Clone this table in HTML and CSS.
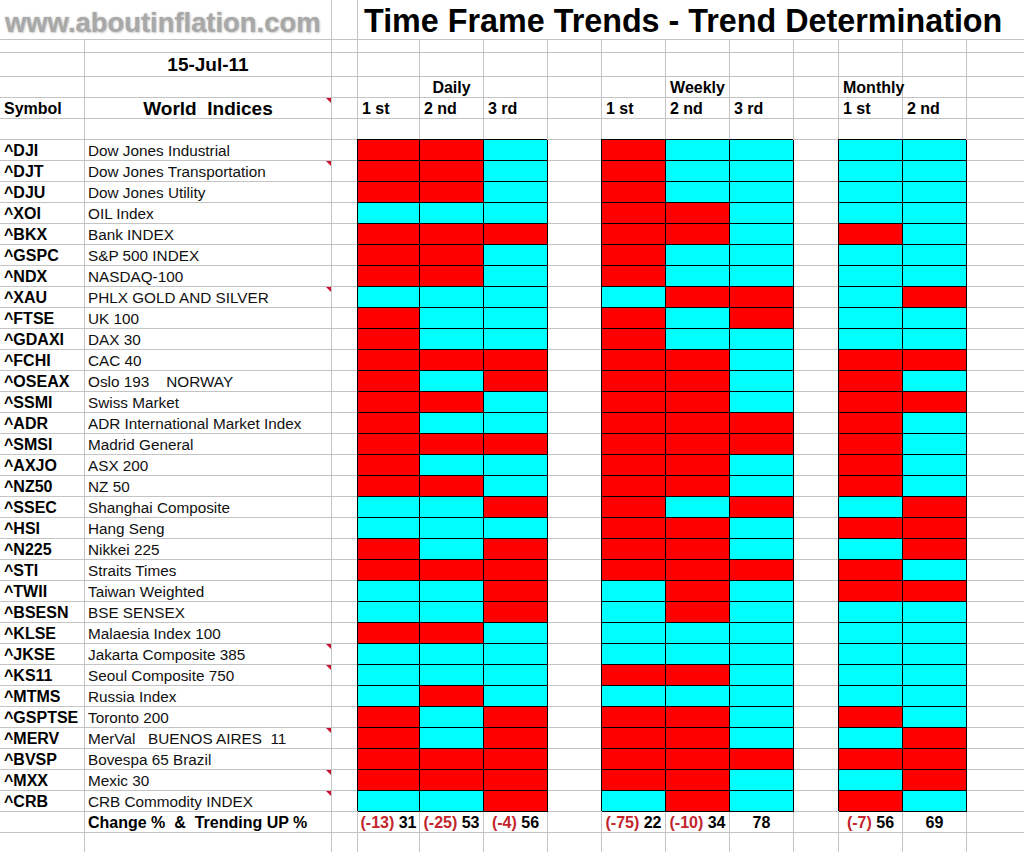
FILE: index.html
```html
<!DOCTYPE html>
<html>
<head>
<meta charset="utf-8">
<title>Time Frame Trends - Trend Determination</title>
<link rel="stylesheet" href="styles.css">
</head>
<body>
<div class="sheet">
  <div class="row title-row">
    <div class="cell logo">www.aboutinflation.com</div>
    <div class="cell"></div>
    <div class="cell title">Time Frame Trends - Trend Determination</div>
  </div>
  <div class="row thin-row">
    <div class="cell"></div><div class="cell"></div><div class="cell"></div><div class="cell"></div><div class="cell"></div><div class="cell"></div><div class="cell"></div><div class="cell"></div><div class="cell"></div><div class="cell"></div><div class="cell"></div><div class="cell"></div><div class="cell"></div><div class="cell end"></div>
  </div>
  <div class="row date-row">
    <div class="cell"></div><div class="cell date">15-Jul-11</div><div class="cell"></div><div class="cell"></div><div class="cell"></div><div class="cell"></div><div class="cell"></div><div class="cell"></div><div class="cell"></div><div class="cell"></div><div class="cell"></div><div class="cell"></div><div class="cell"></div><div class="cell end"></div>
  </div>
  <div class="row head-row">
    <div class="cell"></div><div class="cell"></div><div class="cell"></div><div class="cell"></div><div class="cell hd center">Daily</div><div class="cell"></div><div class="cell"></div><div class="cell"></div><div class="cell hd center">Weekly</div><div class="cell"></div><div class="cell"></div><div class="cell hd">Monthly</div><div class="cell"></div><div class="cell end"></div>
  </div>
  <div class="row head-row">
    <div class="cell hd">Symbol</div><div class="cell big center note">World  Indices</div><div class="cell"></div><div class="cell hd">1 st</div><div class="cell hd">2 nd</div><div class="cell hd">3 rd</div><div class="cell"></div><div class="cell hd">1 st</div><div class="cell hd">2 nd</div><div class="cell hd">3 rd</div><div class="cell"></div><div class="cell hd">1 st</div><div class="cell hd">2 nd</div><div class="cell end"></div>
  </div>
  <div class="row head-row">
    <div class="cell"></div><div class="cell"></div><div class="cell"></div><div class="cell"></div><div class="cell"></div><div class="cell"></div><div class="cell"></div><div class="cell"></div><div class="cell"></div><div class="cell"></div><div class="cell"></div><div class="cell"></div><div class="cell"></div><div class="cell end"></div>
  </div>

  <div class="row data"><div class="cell sym">^DJI</div><div class="cell name">Dow Jones Industrial</div><div class="cell"></div><div class="cell r"></div><div class="cell r"></div><div class="cell c"></div><div class="cell"></div><div class="cell r"></div><div class="cell c"></div><div class="cell c"></div><div class="cell"></div><div class="cell c"></div><div class="cell c"></div><div class="cell end"></div></div>
  <div class="row data"><div class="cell sym">^DJT</div><div class="cell name note">Dow Jones Transportation</div><div class="cell"></div><div class="cell r"></div><div class="cell r"></div><div class="cell c"></div><div class="cell"></div><div class="cell r"></div><div class="cell c"></div><div class="cell c"></div><div class="cell"></div><div class="cell c"></div><div class="cell c"></div><div class="cell end"></div></div>
  <div class="row data"><div class="cell sym">^DJU</div><div class="cell name">Dow Jones Utility</div><div class="cell"></div><div class="cell r"></div><div class="cell r"></div><div class="cell c"></div><div class="cell"></div><div class="cell r"></div><div class="cell c"></div><div class="cell c"></div><div class="cell"></div><div class="cell c"></div><div class="cell c"></div><div class="cell end"></div></div>
  <div class="row data"><div class="cell sym">^XOI</div><div class="cell name">OIL Index</div><div class="cell"></div><div class="cell c"></div><div class="cell c"></div><div class="cell c"></div><div class="cell"></div><div class="cell r"></div><div class="cell r"></div><div class="cell c"></div><div class="cell"></div><div class="cell c"></div><div class="cell c"></div><div class="cell end"></div></div>
  <div class="row data"><div class="cell sym">^BKX</div><div class="cell name">Bank INDEX</div><div class="cell"></div><div class="cell r"></div><div class="cell r"></div><div class="cell r"></div><div class="cell"></div><div class="cell r"></div><div class="cell r"></div><div class="cell c"></div><div class="cell"></div><div class="cell r"></div><div class="cell c"></div><div class="cell end"></div></div>
  <div class="row data"><div class="cell sym">^GSPC</div><div class="cell name">S&amp;P 500 INDEX</div><div class="cell"></div><div class="cell r"></div><div class="cell r"></div><div class="cell c"></div><div class="cell"></div><div class="cell r"></div><div class="cell c"></div><div class="cell c"></div><div class="cell"></div><div class="cell c"></div><div class="cell c"></div><div class="cell end"></div></div>
  <div class="row data"><div class="cell sym">^NDX</div><div class="cell name">NASDAQ-100</div><div class="cell"></div><div class="cell r"></div><div class="cell r"></div><div class="cell c"></div><div class="cell"></div><div class="cell r"></div><div class="cell c"></div><div class="cell c"></div><div class="cell"></div><div class="cell c"></div><div class="cell c"></div><div class="cell end"></div></div>
  <div class="row data"><div class="cell sym">^XAU</div><div class="cell name note">PHLX GOLD AND SILVER</div><div class="cell"></div><div class="cell c"></div><div class="cell c"></div><div class="cell c"></div><div class="cell"></div><div class="cell c"></div><div class="cell r"></div><div class="cell r"></div><div class="cell"></div><div class="cell c"></div><div class="cell r"></div><div class="cell end"></div></div>
  <div class="row data"><div class="cell sym">^FTSE</div><div class="cell name">UK 100</div><div class="cell"></div><div class="cell r"></div><div class="cell c"></div><div class="cell c"></div><div class="cell"></div><div class="cell r"></div><div class="cell c"></div><div class="cell r"></div><div class="cell"></div><div class="cell c"></div><div class="cell c"></div><div class="cell end"></div></div>
  <div class="row data"><div class="cell sym">^GDAXI</div><div class="cell name">DAX 30</div><div class="cell"></div><div class="cell r"></div><div class="cell c"></div><div class="cell c"></div><div class="cell"></div><div class="cell r"></div><div class="cell c"></div><div class="cell c"></div><div class="cell"></div><div class="cell c"></div><div class="cell c"></div><div class="cell end"></div></div>
  <div class="row data"><div class="cell sym">^FCHI</div><div class="cell name">CAC 40</div><div class="cell"></div><div class="cell r"></div><div class="cell r"></div><div class="cell r"></div><div class="cell"></div><div class="cell r"></div><div class="cell r"></div><div class="cell c"></div><div class="cell"></div><div class="cell r"></div><div class="cell r"></div><div class="cell end"></div></div>
  <div class="row data"><div class="cell sym">^OSEAX</div><div class="cell name">Oslo 193    NORWAY</div><div class="cell"></div><div class="cell r"></div><div class="cell c"></div><div class="cell r"></div><div class="cell"></div><div class="cell r"></div><div class="cell r"></div><div class="cell c"></div><div class="cell"></div><div class="cell r"></div><div class="cell c"></div><div class="cell end"></div></div>
  <div class="row data"><div class="cell sym">^SSMI</div><div class="cell name">Swiss Market</div><div class="cell"></div><div class="cell r"></div><div class="cell r"></div><div class="cell c"></div><div class="cell"></div><div class="cell r"></div><div class="cell r"></div><div class="cell c"></div><div class="cell"></div><div class="cell r"></div><div class="cell r"></div><div class="cell end"></div></div>
  <div class="row data"><div class="cell sym">^ADR</div><div class="cell name">ADR International Market Index</div><div class="cell"></div><div class="cell r"></div><div class="cell c"></div><div class="cell c"></div><div class="cell"></div><div class="cell r"></div><div class="cell r"></div><div class="cell r"></div><div class="cell"></div><div class="cell r"></div><div class="cell c"></div><div class="cell end"></div></div>
  <div class="row data"><div class="cell sym">^SMSI</div><div class="cell name">Madrid General</div><div class="cell"></div><div class="cell r"></div><div class="cell r"></div><div class="cell r"></div><div class="cell"></div><div class="cell r"></div><div class="cell r"></div><div class="cell r"></div><div class="cell"></div><div class="cell r"></div><div class="cell c"></div><div class="cell end"></div></div>
  <div class="row data"><div class="cell sym">^AXJO</div><div class="cell name">ASX 200</div><div class="cell"></div><div class="cell r"></div><div class="cell c"></div><div class="cell c"></div><div class="cell"></div><div class="cell r"></div><div class="cell r"></div><div class="cell c"></div><div class="cell"></div><div class="cell r"></div><div class="cell c"></div><div class="cell end"></div></div>
  <div class="row data"><div class="cell sym">^NZ50</div><div class="cell name">NZ 50</div><div class="cell"></div><div class="cell r"></div><div class="cell r"></div><div class="cell c"></div><div class="cell"></div><div class="cell r"></div><div class="cell r"></div><div class="cell c"></div><div class="cell"></div><div class="cell r"></div><div class="cell c"></div><div class="cell end"></div></div>
  <div class="row data"><div class="cell sym">^SSEC</div><div class="cell name">Shanghai Composite</div><div class="cell"></div><div class="cell c"></div><div class="cell c"></div><div class="cell r"></div><div class="cell"></div><div class="cell r"></div><div class="cell c"></div><div class="cell r"></div><div class="cell"></div><div class="cell c"></div><div class="cell r"></div><div class="cell end"></div></div>
  <div class="row data"><div class="cell sym">^HSI</div><div class="cell name">Hang Seng</div><div class="cell"></div><div class="cell c"></div><div class="cell c"></div><div class="cell c"></div><div class="cell"></div><div class="cell r"></div><div class="cell r"></div><div class="cell c"></div><div class="cell"></div><div class="cell r"></div><div class="cell r"></div><div class="cell end"></div></div>
  <div class="row data"><div class="cell sym">^N225</div><div class="cell name">Nikkei 225</div><div class="cell"></div><div class="cell r"></div><div class="cell c"></div><div class="cell r"></div><div class="cell"></div><div class="cell r"></div><div class="cell r"></div><div class="cell c"></div><div class="cell"></div><div class="cell c"></div><div class="cell r"></div><div class="cell end"></div></div>
  <div class="row data"><div class="cell sym">^STI</div><div class="cell name">Straits Times</div><div class="cell"></div><div class="cell r"></div><div class="cell r"></div><div class="cell r"></div><div class="cell"></div><div class="cell r"></div><div class="cell r"></div><div class="cell r"></div><div class="cell"></div><div class="cell r"></div><div class="cell c"></div><div class="cell end"></div></div>
  <div class="row data"><div class="cell sym">^TWII</div><div class="cell name">Taiwan Weighted</div><div class="cell"></div><div class="cell c"></div><div class="cell c"></div><div class="cell r"></div><div class="cell"></div><div class="cell c"></div><div class="cell r"></div><div class="cell c"></div><div class="cell"></div><div class="cell r"></div><div class="cell r"></div><div class="cell end"></div></div>
  <div class="row data"><div class="cell sym">^BSESN</div><div class="cell name">BSE SENSEX</div><div class="cell"></div><div class="cell c"></div><div class="cell c"></div><div class="cell r"></div><div class="cell"></div><div class="cell c"></div><div class="cell r"></div><div class="cell c"></div><div class="cell"></div><div class="cell c"></div><div class="cell c"></div><div class="cell end"></div></div>
  <div class="row data"><div class="cell sym">^KLSE</div><div class="cell name">Malaesia Index 100</div><div class="cell"></div><div class="cell r"></div><div class="cell r"></div><div class="cell c"></div><div class="cell"></div><div class="cell c"></div><div class="cell c"></div><div class="cell c"></div><div class="cell"></div><div class="cell c"></div><div class="cell c"></div><div class="cell end"></div></div>
  <div class="row data"><div class="cell sym">^JKSE</div><div class="cell name note">Jakarta Composite 385</div><div class="cell"></div><div class="cell c"></div><div class="cell c"></div><div class="cell c"></div><div class="cell"></div><div class="cell c"></div><div class="cell c"></div><div class="cell c"></div><div class="cell"></div><div class="cell c"></div><div class="cell c"></div><div class="cell end"></div></div>
  <div class="row data"><div class="cell sym">^KS11</div><div class="cell name note">Seoul Composite 750</div><div class="cell"></div><div class="cell c"></div><div class="cell c"></div><div class="cell c"></div><div class="cell"></div><div class="cell r"></div><div class="cell r"></div><div class="cell c"></div><div class="cell"></div><div class="cell c"></div><div class="cell c"></div><div class="cell end"></div></div>
  <div class="row data"><div class="cell sym">^MTMS</div><div class="cell name">Russia Index</div><div class="cell"></div><div class="cell c"></div><div class="cell r"></div><div class="cell c"></div><div class="cell"></div><div class="cell c"></div><div class="cell c"></div><div class="cell c"></div><div class="cell"></div><div class="cell c"></div><div class="cell c"></div><div class="cell end"></div></div>
  <div class="row data"><div class="cell sym">^GSPTSE</div><div class="cell name">Toronto 200</div><div class="cell"></div><div class="cell r"></div><div class="cell c"></div><div class="cell r"></div><div class="cell"></div><div class="cell r"></div><div class="cell r"></div><div class="cell c"></div><div class="cell"></div><div class="cell r"></div><div class="cell c"></div><div class="cell end"></div></div>
  <div class="row data"><div class="cell sym">^MERV</div><div class="cell name note">MerVal   BUENOS AIRES  11</div><div class="cell"></div><div class="cell r"></div><div class="cell c"></div><div class="cell r"></div><div class="cell"></div><div class="cell r"></div><div class="cell r"></div><div class="cell c"></div><div class="cell"></div><div class="cell c"></div><div class="cell r"></div><div class="cell end"></div></div>
  <div class="row data"><div class="cell sym">^BVSP</div><div class="cell name">Bovespa 65 Brazil</div><div class="cell"></div><div class="cell r"></div><div class="cell r"></div><div class="cell r"></div><div class="cell"></div><div class="cell r"></div><div class="cell r"></div><div class="cell r"></div><div class="cell"></div><div class="cell r"></div><div class="cell r"></div><div class="cell end"></div></div>
  <div class="row data"><div class="cell sym">^MXX</div><div class="cell name note">Mexic 30</div><div class="cell"></div><div class="cell r"></div><div class="cell r"></div><div class="cell r"></div><div class="cell"></div><div class="cell r"></div><div class="cell r"></div><div class="cell c"></div><div class="cell"></div><div class="cell c"></div><div class="cell r"></div><div class="cell end"></div></div>
  <div class="row data"><div class="cell sym">^CRB</div><div class="cell name note">CRB Commodity INDEX</div><div class="cell"></div><div class="cell c"></div><div class="cell c"></div><div class="cell r"></div><div class="cell"></div><div class="cell c"></div><div class="cell r"></div><div class="cell c"></div><div class="cell"></div><div class="cell r"></div><div class="cell c"></div><div class="cell end"></div></div>

  <div class="row data totals">
    <div class="cell"></div><div class="cell hd">Change %  &amp;  Trending UP %</div><div class="cell"></div>
    <div class="cell center"><span class="neg">(-13)</span> 31</div>
    <div class="cell center"><span class="neg">(-25)</span> 53</div>
    <div class="cell center"><span class="neg">(-4)</span> 56</div>
    <div class="cell"></div>
    <div class="cell center"><span class="neg">(-75)</span> 22</div>
    <div class="cell center"><span class="neg">(-10)</span> 34</div>
    <div class="cell center">78</div>
    <div class="cell"></div>
    <div class="cell center"><span class="neg">(-7)</span> 56</div>
    <div class="cell center">69</div>
    <div class="cell end"></div>
  </div>
  <div class="row last-row">
    <div class="cell"></div><div class="cell"></div><div class="cell"></div><div class="cell"></div><div class="cell"></div><div class="cell"></div><div class="cell"></div><div class="cell"></div><div class="cell"></div><div class="cell"></div><div class="cell"></div><div class="cell"></div><div class="cell"></div><div class="cell end"></div>
  </div>
</div>
</body>
</html>
```
FILE: styles.css
```css
html, body {
  margin: 0;
  padding: 0;
  background: #ffffff;
}

body {
  font-family: "Liberation Sans", Arial, sans-serif;
  color: #000;
  overflow: hidden;
}

.sheet {
  width: 1024px;
  height: 852px;
  overflow: hidden;
}

.row {
  display: grid;
  grid-template-columns: 85px 247px 26px 62px 64px 64px 54px 64px 64px 64px 45px 64px 64px 57px;
}

.cell {
  box-sizing: border-box;
  border-right: 1px solid #c4c4c4;
  border-bottom: 1px solid #c4c4c4;
  white-space: pre;
  overflow: visible;
  position: relative;
  min-width: 0;
}

.cell.end {
  border-right: none;
}

/* title row */
.title-row {
  height: 40px;
}

.title-row .cell {
  height: 40px;
}

.logo {
  grid-column: span 2;
  padding: 7px 0 0 5px;
  font-size: 27.4px;
  line-height: 32px;
  font-weight: bold;
  color: #a8a8a8;
  text-shadow: 0 0 2px #c8c8c8, 1px 1px 2px #d4d4d4;
}

.title {
  grid-column: span 11;
  border-right: none;
  padding: 3px 0 0 6px;
  font-size: 32.3px;
  line-height: 36px;
  font-weight: bold;
}

.thin-row .cell {
  height: 13px;
}

.date-row .cell {
  height: 24px;
  line-height: 24px;
}

.date {
  text-align: center;
  font-weight: bold;
  font-size: 19px;
}

.head-row .cell,
.data .cell {
  height: 21px;
  line-height: 21px;
}

.last-row .cell {
  height: 20px;
}

.hd {
  font-weight: bold;
  font-size: 16px;
  padding-left: 4px;
}

.big {
  font-weight: bold;
  font-size: 19px;
}

.center {
  text-align: center;
  padding-left: 0;
}

.sym {
  font-weight: bold;
  font-size: 16px;
  padding-left: 4px;
}

.name {
  font-size: 15.3px;
  padding-left: 3px;
  color: #111;
}

/* trend cells */
.r,
.c {
  border-right-color: #000;
  border-bottom-color: #000;
  box-shadow: -1px -1px 0 0 #000;
}

.r {
  background: #ff0000;
}

.c {
  background: #00ffff;
}

/* comment indicator */
.note::after {
  content: "";
  position: absolute;
  top: 0;
  right: 0;
  width: 0;
  height: 0;
  border-top: 5px solid #c8102e;
  border-left: 5px solid transparent;
}

.totals .cell {
  font-weight: bold;
  font-size: 16px;
}

.totals .hd {
  padding-left: 3px;
}

.neg {
  color: #c4242c;
}
```
